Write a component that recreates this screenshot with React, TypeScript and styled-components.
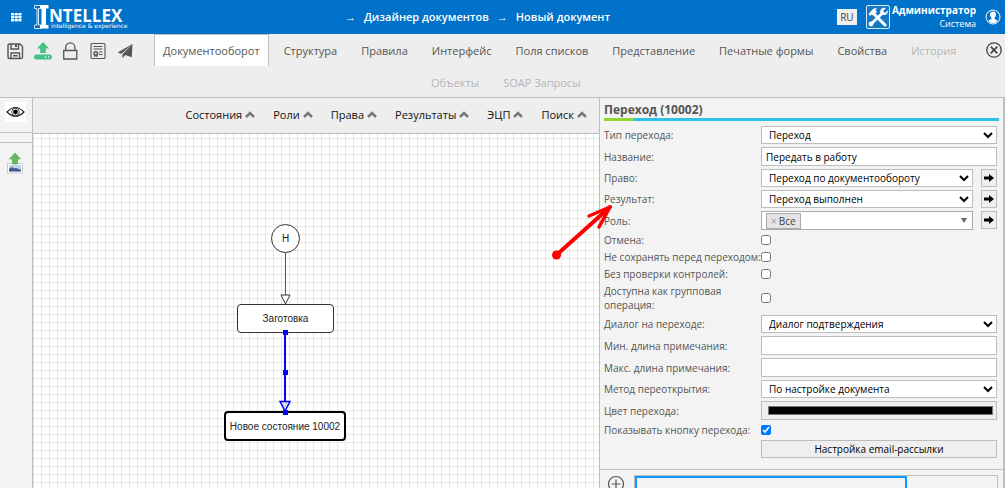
import React, { useState } from "react";
import styled, { createGlobalStyle } from "styled-components";

const GlobalStyle = createGlobalStyle`
  * { box-sizing: border-box; }
  body { margin: 0; font-family: "Open Sans", "Noto Sans", sans-serif; font-size: 10px; color: #555; }
  button, input, select { font-family: inherit; margin: 0; }
`;

const line = "#bdbdbd";

const Page = styled.div`
  display: flex;
  flex-direction: column;
  height: 100vh;
  overflow: hidden;
  background: #f3f3f3;
`;

/* header */
const Header = styled.header`
  display: grid;
  grid-template-columns: 1fr auto 1fr;
  align-items: center;
  height: 34px;
  padding: 0 4px 0 10px;
  flex: none;
  background: #0072c9;
  color: #fff;
`;
const Brand = styled.div`
  display: flex;
  align-items: center;
  gap: 11px;
`;
const Logo = styled.a`
  display: flex;
  align-items: flex-start;
  color: #fff;
  text-decoration: none;
`;
const LogoText = styled.span`
  display: flex;
  flex-direction: column;
  padding-top: 4px;
`;
const LogoName = styled.span`
  font-size: 17px;
  line-height: 15px;
  font-weight: 700;
`;
const LogoTag = styled.span`
  padding-left: 2px;
  font-family: "DejaVu Sans", sans-serif;
  font-size: 6px;
  line-height: 6px;
`;
const Crumbs = styled.nav`
  display: flex;
  gap: 8px;
  margin-right: 56px;
  font-size: 11px;
  line-height: 16px;
  font-weight: 600;
  white-space: nowrap;
`;
const Crumb = styled.a`
  color: #fff;
  text-decoration: none;
`;
const Account = styled.div`
  display: flex;
  align-items: center;
  justify-content: flex-end;
`;
const Lang = styled.button`
  width: 20px;
  height: 16px;
  margin-right: 9px;
  padding: 0;
  border: 0;
  background: #f0f0f0;
  color: #444;
  font-size: 10px;
  line-height: 14px;
`;
const UserText = styled.div`
  display: flex;
  flex-direction: column;
  align-items: flex-end;
  margin: 0 9px 0 2px;
  font-size: 9px;
  line-height: 13px;
`;
const UserName = styled.strong`
  font-size: 10px;
`;
const IconButton = styled.button`
  display: flex;
  padding: 0;
  border: 0;
  background: none;
  color: inherit;
`;

/* tab strip */
const Strip = styled.div`
  display: flex;
  flex: none;
  height: 64px;
  border-bottom: 1px solid ${line};
  background: #eee;
`;
const Tools = styled.div`
  display: flex;
  flex: none;
  gap: 10px;
  width: 154px;
  height: 34px;
  align-items: center;
  padding-left: 6px;
  color: #555;
`;
const TabRows = styled.div`
  flex: 1;
  min-width: 0;
`;
const TabRow = styled.div<{ $second?: boolean }>`
  display: flex;
  height: ${(p) => (p.$second ? 31 : 32)}px;
  padding-left: ${(p) => (p.$second ? 268 : 0)}px;
`;
const Tab = styled.button<{ $active?: boolean; $muted?: boolean }>`
  height: 32px;
  padding: 0 8px 1px;
  margin-right: 6px;
  border: 1px solid ${(p) => (p.$active ? line : "transparent")};
  border-bottom: 0;
  background: ${(p) => (p.$active ? "#fff" : "none")};
  color: ${(p) => (p.$muted ? "#b5b5b5" : "#555")};
  font-size: 11px;
  white-space: nowrap;
`;
const CloseSlot = styled.div`
  display: flex;
  flex: none;
  align-items: flex-start;
  padding: 8px 3px 0 0;
`;

/* work area */
const Work = styled.main`
  display: flex;
  flex: 1;
  min-height: 0;
`;
const Rail = styled.aside`
  flex: none;
  width: 33px;
  border-right: 1px solid ${line};
  background: #f3f3f3;
`;
const RailCell = styled.div<{ $h: number; $open?: boolean }>`
  display: flex;
  justify-content: center;
  align-items: center;
  height: ${(p) => p.$h}px;
  padding-right: 2px;
  border-bottom: ${(p) => (p.$open ? 0 : 1)}px solid ${line};
`;
const EyeBox = styled.span`
  display: flex;
  align-items: center;
  height: 20px;
  background: #fff;
  margin-bottom: 7px;
`;
const Stage = styled.section`
  display: flex;
  flex-direction: column;
  flex: 1;
  min-width: 0;
`;
const MenuBar = styled.div`
  display: flex;
  justify-content: flex-end;
  align-items: center;
  gap: 18px;
  height: 36px;
  flex: none;
  padding: 0 12px 2px 0;
  border-bottom: 1px solid ${line};
  background: #eee;
`;
const MenuItem = styled.button`
  display: flex;
  align-items: center;
  gap: 3px;
  padding: 0;
  border: 0;
  background: none;
  color: #111;
  font-size: 11px;
  line-height: 16px;
`;
const Canvas = styled.div`
  position: relative;
  flex: 1;
  overflow: hidden;
  background-color: #fff;
  background-image: linear-gradient(#e7ebdf 1px, transparent 1px),
    linear-gradient(90deg, #e7ebdf 1px, transparent 1px);
  background-size: 8px 8px;
  background-position: 0 4px;
`;
const Edges = styled.svg`
  position: absolute;
  left: 0;
  top: 0;
`;
const Node = styled.div<{ $x: number; $y: number; $w: number; $h: number; $round?: boolean; $strong?: boolean }>`
  position: absolute;
  left: ${(p) => p.$x}px;
  top: ${(p) => p.$y}px;
  width: ${(p) => p.$w}px;
  height: ${(p) => p.$h}px;
  display: flex;
  align-items: center;
  justify-content: center;
  border: ${(p) => (p.$strong ? "2px solid #000" : "1px solid #333")};
  border-radius: ${(p) => (p.$round ? "50%" : "4px")};
  background: #fff;
  color: #222;
  font-family: "Liberation Sans", Arial, sans-serif;
  font-size: 10px;
  white-space: nowrap;
`;

/* property panel */
const Panel = styled.section`
  position: relative;
  flex: none;
  width: 406px;
  border-left: 1px solid ${line};
  border-right: 2px solid ${line};
  background: #f3f3f3;
`;
const Title = styled.h2`
  margin: 3px 4px 0;
  font-size: 12px;
  line-height: 17px;
  font-weight: 700;
`;
const Accent = styled.div`
  height: 3px;
  margin: 0 4px 5px;
  background: linear-gradient(90deg, #8fd62f 30px, #2fc0e8 30px);
`;
const Form = styled.form`
  display: flex;
  flex-direction: column;
  gap: 3px;
  padding: 0 6px 11px 4px;
  border-bottom: 1px solid ${line};
`;
const Row = styled.div`
  display: grid;
  grid-template-columns: 157px minmax(0, 1fr);
  align-items: center;
`;
const Label = styled.label`
  line-height: 14px;
  font-size: 10px;
  white-space: pre;
`;
const FieldLine = styled.div`
  display: grid;
  grid-template-columns: minmax(0, 1fr) 16px;
  gap: 8px;
`;
const Select = styled.select`
  width: 100%;
  height: 18px;
  padding: 0 0 0 3px;
  border: 1px solid ${line};
  border-radius: 0;
  background: #fff;
  color: #000;
  font-size: 10px;
`;
const TextInput = styled.input`
  width: 100%;
  height: 19px;
  padding: 0 4px;
  border: 1px solid ${line};
  background: #fff;
  color: #000;
  font-size: 10px;
`;
const ColorInput = styled.input`
  display: block;
  width: 100%;
  height: 19px;
  padding: 0;
  border: 1px solid ${line};
  background: #efefef;
  &::-webkit-color-swatch-wrapper { padding: 4px 3px 4px 6px; }
  &::-webkit-color-swatch { border: 1px solid #777; }
`;
const Check = styled.input`
  display: block;
  width: 10px;
  height: 10px;
`;
const GoButton = styled.button`
  display: flex;
  align-items: center;
  justify-content: center;
  height: 18px;
  padding: 0;
  border: 1px solid ${line};
  background: #efefef;
  color: #000;
`;
const TagBox = styled.div`
  display: flex;
  align-items: center;
  justify-content: space-between;
  height: 19px;
  padding: 0 5px 0 4px;
  border: 1px solid #aaa;
  background: #fff;
`;
const Tag = styled.button`
  display: flex;
  align-items: center;
  gap: 2px;
  height: 16px;
  padding: 0 4px;
  border: 1px solid #aaa;
  background: #e4e4e4;
  color: #444;
  font-size: 10px;
  line-height: 14px;
`;
const Cross = styled.span`
  color: #999;
`;
const MailButton = styled.button`
  height: 18px;
  padding: 0;
  border: 1px solid ${line};
  background: #efefef;
  color: #000;
  font-size: 10px;
  line-height: 14px;
`;
const Footer = styled.div`
  display: flex;
  align-items: flex-start;
  gap: 9px;
  padding: 5px 5px 0 7px;
`;
const List = styled.div`
  flex: 1;
  height: 40px;
  border: 1px solid ${line};
`;
const Picked = styled.div`
  width: 75%;
  height: 40px;
  border: 2px solid #0d99ff;
`;
const Pointer = styled.svg`
  position: absolute;
  left: -50px;
  top: 102px;
  pointer-events: none;
`;

const tabs = ["Документооборот", "Структура", "Правила", "Интерфейс", "Поля списков", "Представление", "Печатные формы", "Свойства"];
const menus = ["Состояния", "Роли", "Права", "Результаты", "ЭЦП", "Поиск"];

const Go = () => (
  <GoButton type="button" aria-label="Открыть">
    <svg width="12" height="10" viewBox="0 0 12 10"><path d="M1 3.500h5V1l5 4-5 4V6.500H1z" fill="#000" /></svg>
  </GoButton>
);

function SelectRow({ id, label, value, go }: { id: string; label: string; value: string; go?: boolean }) {
  const select = <Select id={id} defaultValue={value}><option>{value}</option></Select>;
  return (
    <Row>
      <Label htmlFor={id}>{label}</Label>
      {go ? <FieldLine>{select}<Go /></FieldLine> : select}
    </Row>
  );
}
function TextRow({ id, label, value = "" }: { id: string; label: string; value?: string }) {
  return (
    <Row>
      <Label htmlFor={id}>{label}</Label>
      <TextInput id={id} type="text" defaultValue={value} />
    </Row>
  );
}
function CheckRow({ id, label, on = false }: { id: string; label: string; on?: boolean }) {
  return (
    <Row>
      <Label htmlFor={id}>{label}</Label>
      <Check id={id} type="checkbox" defaultChecked={on} />
    </Row>
  );
}

export default function App() {
  const [active, setActive] = useState(tabs[0]);
  return (
    <Page>
      <GlobalStyle />
      <Header>
        <Brand>
          <IconButton aria-label="Приложения">
            <svg width="13" height="11" viewBox="0 0 13 11" fill="#fff">
              {[1, 4.700, 8.400].map((x) => [1, 4, 7].map((y) => <rect key={`${x}-${y}`} x={x} y={y} width="3.1" height="2.4" />))}
            </svg>
          </IconButton>
          <Logo href="#" aria-label="Intellex">
            <svg width="15" height="26" viewBox="0 0 15 26">
              <path d="M.5 1.500h7v3h-3v16.500h3v3.500h-7v-3.500h2.500V4.500H.5z" fill="none" stroke="#cfe4f6" strokeWidth="1" />
              <path d="M6 1h8.500v3.500H12v16.500h2.500v3.500H6v-3.500h1.500V4.500H6z" fill="#fff" />
            </svg>
            <LogoText>
              <LogoName>NTELLEX</LogoName>
              <LogoTag>intelligence &amp; experience</LogoTag>
            </LogoText>
          </Logo>
        </Brand>
        <Crumbs>
          <span>→</span><Crumb href="#">Дизайнер документов</Crumb>
          <span>→</span><Crumb href="#">Новый документ</Crumb>
        </Crumbs>
        <Account>
          <Lang>RU</Lang>
          <svg width="24" height="24" viewBox="0 0 24 24">
            <rect x="0.5" y="0.5" width="23" height="23" rx="1.500" fill="#1579c4" stroke="#d5e8f7" />
            <path d="M7 8l12 12" stroke="#fff" strokeWidth="3" strokeLinecap="round" />
            <path d="M2.500 9l5-5.500 3.500-.5-1.500 2 1.500 2-3.500 3.500-2-1-1.500 1.500z" fill="#fff" />
            <path d="M4.500 19.500L16.500 8" stroke="#fff" strokeWidth="2.800" strokeLinecap="round" />
            <path d="M20 3l-2.800 2.800.8 1.500 1.500.5L22 5.200c.3 3-2 5.300-5 4.800-2.500-.6-3.300-3-2.500-5C15.500 3 17.800 2.200 20 3z" fill="#fff" />
            <circle cx="5" cy="19" r="2.400" fill="#fff" />
          </svg>
          <UserText><UserName>Администратор</UserName><span>Система</span></UserText>
          <IconButton aria-label="Профиль">
            <svg width="16" height="16" viewBox="0 0 16 16">
              <circle cx="8" cy="8" r="7" fill="none" stroke="#fff" />
              <path d="M8 2.500c1.900 0 3 1.300 3 3.100 0 1.500-.7 2.700-1.500 3.300v1l3.200 1.500c-1 1.600-2.700 2.600-4.700 2.600s-3.700-1-4.700-2.600l3.200-1.500v-1C5.700 8.300 5 7.100 5 5.600c0-1.800 1.100-3.100 3-3.100z" fill="#fff" />
            </svg>
          </IconButton>
        </Account>
      </Header>

      <Strip>
        <Tools>
          <IconButton aria-label="Сохранить">
            <svg width="18" height="18" viewBox="0 0 18 18" fill="none" stroke="currentColor" strokeWidth="1.400">
              <path d="M2 3.500Q2 2 3.500 2H14l2.500 2.500V15q0 1.500-1.500 1.500H3.500Q2 16.500 2 15z" />
              <path d="M5 2v5h7.500V2M5 16.500V11h8.500v5.500M7 13.700h4.500" /><path d="M9 2.500h2V5H9z" fill="currentColor" stroke="none" />
            </svg>
          </IconButton>
          <IconButton aria-label="Выгрузить">
            <svg width="18" height="18" viewBox="0 0 18 18" fill="#45c183">
              <path d="M9 0l6 6.500h-3.200V11H6.200V6.500H3z" /><rect x="0" y="12.500" width="18" height="5" rx="2.500" />
              <circle cx="11.500" cy="15" r=".8" fill="#fff" /><circle cx="14.800" cy="15" r=".8" fill="#fff" />
            </svg>
          </IconButton>
          <IconButton aria-label="Заблокировать">
            <svg width="18" height="18" viewBox="0 0 18 18" fill="none" stroke="currentColor" strokeWidth="1.300">
              <path d="M1.700 8.500h13.100v8.500H1.700zM3.700 8.500V5.500a4.600 4.600 0 0 1 9.200 0v3" />
            </svg>
          </IconButton>
          <IconButton aria-label="Сертификат">
            <svg width="18" height="18" viewBox="0 0 18 18" fill="none" stroke="currentColor" strokeWidth="1.100">
              <rect x="1" y="1.500" width="14" height="15" rx="1" /><path d="M3.500 4.500h9M3.500 7h9M9 10h3.500M9 12.500h3.500" />
              <circle cx="5.800" cy="11.500" r="1.800" strokeWidth="1.500" /><path d="M4.800 13.500v1.500M6.800 13.500v1.500" />
            </svg>
          </IconButton>
          <IconButton aria-label="Отправить">
            <svg width="18" height="18" viewBox="0 0 18 18" fill="currentColor">
              <path d="M14.500 2L-.5 10.500l4 1.300zM14.500 2L4.500 12.300v4l2.300-2.800zM14.500 2L7.200 13l6.600 2.200z" />
            </svg>
          </IconButton>
        </Tools>
        <TabRows>
          <TabRow>
            {tabs.map((t) => <Tab key={t} $active={t === active} onClick={() => setActive(t)}>{t}</Tab>)}
            <Tab $muted>История</Tab>
          </TabRow>
          <TabRow $second><Tab $muted>Объекты</Tab><Tab $muted>SOAP Запросы</Tab></TabRow>
        </TabRows>
        <CloseSlot>
          <IconButton aria-label="Закрыть">
            <svg width="16" height="16" viewBox="0 0 16 16" fill="none" stroke="#444" strokeWidth="1.300">
              <circle cx="8" cy="8" r="7.200" /><path d="M4.700 4.700l6.600 6.600M11.300 4.700l-6.600 6.600" strokeWidth="1.700" />
            </svg>
          </IconButton>
        </CloseSlot>
      </Strip>

      <Work>
        <Rail>
          <RailCell $h={35}>
            <EyeBox>
              <svg width="21" height="14" viewBox="0 0 21 14" fill="none" stroke="#222">
                <path d="M2 7q8.500-9 17 0-8.500 8.500-17 0z" strokeWidth="1.200" /><circle cx="10.500" cy="7" r="3.800" strokeWidth=".8" />
                <circle cx="10.500" cy="7" r="2.400" fill="#000" stroke="none" />
              </svg>
            </EyeBox>
          </RailCell>
          <RailCell $h={10} />
          <RailCell $h={40} $open>
            <svg width="18" height="22" viewBox="0 0 18 22">
              <rect x="1.500" y="11.500" width="15" height="9.500" fill="#fff" stroke="#ccc" />
              <rect x="3" y="13" width="12" height="6.500" fill="#bcd3ec" />
              <path d="M3 19.500V17l3-2 2 1.500 2-.5 5 2v1.500z" fill="#3e5a86" />
              <path d="M9 1l5.500 6h-3v5h-5V7h-3z" fill="#63bb5c" stroke="#4da34a" strokeWidth=".6" />
            </svg>
          </RailCell>
        </Rail>

        <Stage>
          <MenuBar>
            {menus.map((m) => (
              <MenuItem key={m}>
                {m}
                <svg width="10" height="8" viewBox="0 0 10 8"><path d="M1 6l4-4 4 4" fill="none" stroke="#777" strokeWidth="2.500" /></svg>
              </MenuItem>
            ))}
          </MenuBar>
          <Canvas>
            <Node $x={238} $y={90} $w={29} $h={29} $round>Н</Node>
            <Node $x={204} $y={170} $w={97} $h={29}>Заготовка</Node>
            <Node $x={191} $y={277} $w={122} $h={30} $strong>Новое состояние 10002</Node>
            <Edges width="400" height="320" viewBox="0 0 400 320">
              <path d="M252.500 118v43" stroke="#555" />
              <path d="M248 161h9l-4.500 9z" fill="#fff" stroke="#333" />
              <path d="M252 198v70" stroke="#00f" strokeWidth="2" />
              <path d="M247 267.500h10l-5 9.500z" fill="#ddd" stroke="#00f" strokeWidth="1.500" />
              <path d="M250 196h5v5h-5zM250 236h5v5h-5zM250 276h5v5h-5z" fill="#00f" />
            </Edges>
          </Canvas>
        </Stage>

        <Panel>
          <Title>Переход (10002)</Title>
          <Accent />
          <Form onSubmit={(e) => e.preventDefault()}>
            <SelectRow id="type" label="Тип перехода:" value="Переход" />
            <TextRow id="name" label="Название:" value="Передать в работу" />
            <SelectRow id="right" label="Право:" value="Переход по документообороту" go />
            <SelectRow id="result" label="Результат:" value="Переход выполнен" go />
            <Row>
              <Label htmlFor="role">Роль:</Label>
              <FieldLine>
                <TagBox>
                  <Tag id="role" type="button"><Cross>×</Cross>Все</Tag>
                  <svg width="6" height="5" viewBox="0 0 6 5"><path d="M0 0h6L3 5z" fill="#666" /></svg>
                </TagBox>
                <Go />
              </FieldLine>
            </Row>
            <CheckRow id="cancel" label="Отмена:" />
            <CheckRow id="nosave" label="Не сохранять перед переходом:" />
            <CheckRow id="nocheck" label="Без проверки контролей:" />
            <CheckRow id="group" label={"Доступна как групповая\nоперация:"} />
            <SelectRow id="dialog" label="Диалог на переходе:" value="Диалог подтверждения" />
            <TextRow id="min" label="Мин. длина примечания:" />
            <TextRow id="max" label="Макс. длина примечания:" />
            <SelectRow id="reopen" label="Метод переоткрытия:" value="По настройке документа" />
            <Row>
              <Label htmlFor="color">Цвет перехода:</Label>
              <ColorInput id="color" type="color" defaultValue="#000000" />
            </Row>
            <CheckRow id="show" label="Показывать кнопку перехода:" on />
            <Row><span /><MailButton type="button">Настройка email-рассылки</MailButton></Row>
          </Form>
          <Footer>
            <IconButton aria-label="Добавить">
              <svg width="18" height="18" viewBox="0 0 18 18" fill="none" stroke="#555" strokeWidth="1.200">
                <circle cx="9" cy="9" r="7.500" /><path d="M9 4.500v9M4.500 9h9" />
              </svg>
            </IconButton>
            <List><Picked /></List>
          </Footer>
          <Pointer width="70" height="62" viewBox="0 0 70 62" fill="none" stroke="#f00" strokeLinecap="round" strokeLinejoin="round">
            <circle cx="6.500" cy="55" r="4.500" fill="#f00" stroke="none" />
            <path d="M6.500 55L60 7" strokeWidth="4" />
            <path d="M39 16L60 7 49 27" strokeWidth="3.500" />
          </Pointer>
        </Panel>
      </Work>
    </Page>
  );
}
